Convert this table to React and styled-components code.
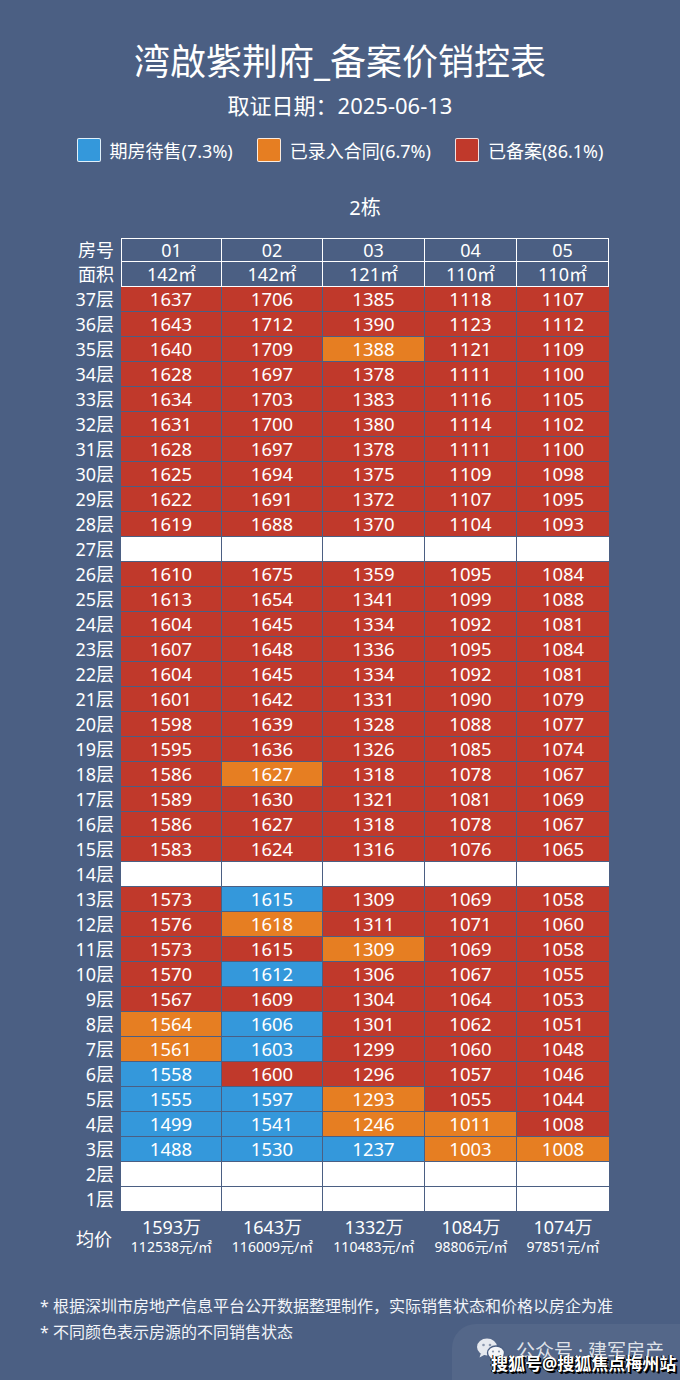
import React from 'react';
import styled, { createGlobalStyle } from 'styled-components';

const BG = '#4b5f83';
const RED = '#c0392b';
const ORANGE = '#e67e22';
const BLUE = '#3498db';

const GlobalStyle = createGlobalStyle`
  html, body {
    margin: 0;
    padding: 0;
    background: ${BG};
  }
  body {
    font-family: "Noto Sans", "Noto Sans CJK SC", sans-serif;
    color: #fff;
  }
`;

const Page = styled.div`
  position: relative;
  width: 680px;
  height: 1380px;
  overflow: hidden;
  background: ${BG};
`;

const Title = styled.h1`
  margin: 39px 0 0;
  height: 46px;
  line-height: 46px;
  font-size: 36px;
  font-weight: 400;
  text-align: center;
`;

const Subtitle = styled.div`
  margin-top: 5px;
  height: 30px;
  line-height: 30px;
  font-size: 22px;
  text-align: center;
`;

const Legend = styled.div`
  margin-top: 17px;
  height: 26px;
  display: flex;
  justify-content: center;
  align-items: center;
  gap: 24px;
`;

const LegendItem = styled.div`
  display: flex;
  align-items: center;
  gap: 9px;
  font-size: 18px;
`;

const Swatch = styled.span`
  width: 24px;
  height: 24px;
  box-sizing: border-box;
  border: 1px solid rgba(255, 255, 255, 0.85);
  border-radius: 2px;
  background: ${(p) => p.$color};
`;

const Building = styled.div`
  margin-top: 30px;
  padding-left: 50px;
  height: 30px;
  line-height: 30px;
  font-size: 20px;
  text-align: center;
`;

const Table = styled.div`
  margin-top: 15px;
  margin-left: 68px;
  display: grid;
  grid-template-columns: 53px 101px 101px 102px 92px 92px;
`;

const RowLabel = styled.div`
  height: ${(p) => p.$h || 25}px;
  line-height: ${(p) => p.$h || 25}px;
  font-size: 18px;
  text-align: right;
  padding-right: 7px;
`;

const HeadCell = styled.div`
  height: ${(p) => p.$h}px;
  line-height: ${(p) => p.$h - 1}px;
  box-sizing: border-box;
  border-right: 1px solid #fff;
  border-bottom: 1px solid #fff;
  border-top: ${(p) => (p.$top ? '1px solid #fff' : 'none')};
  border-left: ${(p) => (p.$first ? '1px solid #fff' : 'none')};
  font-size: 18px;
  text-align: center;
`;

const statusColor = { r: RED, o: ORANGE, b: BLUE, e: '#fff' };

const Cell = styled.div`
  height: 25px;
  line-height: 24px;
  box-sizing: border-box;
  border-right: ${(p) => (p.$last ? 'none' : `1px solid ${BG}`)};
  border-bottom: 1px solid ${BG};
  background: ${(p) => statusColor[p.$s]};
  font-size: 18.5px;
  text-align: center;
`;

const AvgRow = styled.div`
  margin-top: 5px;
  margin-left: 68px;
  display: grid;
  grid-template-columns: 53px 101px 101px 102px 92px 92px;
  align-items: center;
`;

const AvgLabel = styled.div`
  font-size: 18px;
  text-align: right;
  padding-right: 9px;
  padding-top: 4px;
`;

const AvgCell = styled.div`
  display: flex;
  flex-direction: column;
  align-items: center;
`;

const AvgTotal = styled.span`
  font-size: 18px;
  line-height: 21px;
`;

const AvgUnit = styled.span`
  font-size: 14px;
  line-height: 17px;
  white-space: nowrap;
`;

const Notes = styled.div`
  margin-top: 40px;
  padding-left: 40px;
  display: flex;
  flex-direction: column;
  gap: 3px;
`;

const Note = styled.div`
  font-size: 16px;
  line-height: 23px;
  color: #f2f4f8;
`;

const Watermark = styled.div`
  position: absolute;
  left: 452px;
  top: 1324px;
  width: 260px;
  height: 80px;
  border-radius: 24px;
  background: rgba(255, 255, 255, 0.05);
`;

const WechatLine = styled.div`
  position: absolute;
  left: 476px;
  top: 1336px;
  display: flex;
  align-items: center;
  gap: 10px;
  font-size: 19px;
  color: rgba(255, 255, 255, 0.82);
  white-space: nowrap;
`;

const Sohu = styled.div`
  position: absolute;
  left: 491px;
  top: 1350px;
  font-size: 17px;
  font-weight: 700;
  color: #fff;
  white-space: nowrap;
  text-shadow: 1px 1px 0 #000, 2px 2px 0 #000, -1px 0 0 #000;
`;

const floors = {
  37: [[1637, 'r'], [1706, 'r'], [1385, 'r'], [1118, 'r'], [1107, 'r']],
  36: [[1643, 'r'], [1712, 'r'], [1390, 'r'], [1123, 'r'], [1112, 'r']],
  35: [[1640, 'r'], [1709, 'r'], [1388, 'o'], [1121, 'r'], [1109, 'r']],
  34: [[1628, 'r'], [1697, 'r'], [1378, 'r'], [1111, 'r'], [1100, 'r']],
  33: [[1634, 'r'], [1703, 'r'], [1383, 'r'], [1116, 'r'], [1105, 'r']],
  32: [[1631, 'r'], [1700, 'r'], [1380, 'r'], [1114, 'r'], [1102, 'r']],
  31: [[1628, 'r'], [1697, 'r'], [1378, 'r'], [1111, 'r'], [1100, 'r']],
  30: [[1625, 'r'], [1694, 'r'], [1375, 'r'], [1109, 'r'], [1098, 'r']],
  29: [[1622, 'r'], [1691, 'r'], [1372, 'r'], [1107, 'r'], [1095, 'r']],
  28: [[1619, 'r'], [1688, 'r'], [1370, 'r'], [1104, 'r'], [1093, 'r']],
  27: null,
  26: [[1610, 'r'], [1675, 'r'], [1359, 'r'], [1095, 'r'], [1084, 'r']],
  25: [[1613, 'r'], [1654, 'r'], [1341, 'r'], [1099, 'r'], [1088, 'r']],
  24: [[1604, 'r'], [1645, 'r'], [1334, 'r'], [1092, 'r'], [1081, 'r']],
  23: [[1607, 'r'], [1648, 'r'], [1336, 'r'], [1095, 'r'], [1084, 'r']],
  22: [[1604, 'r'], [1645, 'r'], [1334, 'r'], [1092, 'r'], [1081, 'r']],
  21: [[1601, 'r'], [1642, 'r'], [1331, 'r'], [1090, 'r'], [1079, 'r']],
  20: [[1598, 'r'], [1639, 'r'], [1328, 'r'], [1088, 'r'], [1077, 'r']],
  19: [[1595, 'r'], [1636, 'r'], [1326, 'r'], [1085, 'r'], [1074, 'r']],
  18: [[1586, 'r'], [1627, 'o'], [1318, 'r'], [1078, 'r'], [1067, 'r']],
  17: [[1589, 'r'], [1630, 'r'], [1321, 'r'], [1081, 'r'], [1069, 'r']],
  16: [[1586, 'r'], [1627, 'r'], [1318, 'r'], [1078, 'r'], [1067, 'r']],
  15: [[1583, 'r'], [1624, 'r'], [1316, 'r'], [1076, 'r'], [1065, 'r']],
  14: null,
  13: [[1573, 'r'], [1615, 'b'], [1309, 'r'], [1069, 'r'], [1058, 'r']],
  12: [[1576, 'r'], [1618, 'o'], [1311, 'r'], [1071, 'r'], [1060, 'r']],
  11: [[1573, 'r'], [1615, 'r'], [1309, 'o'], [1069, 'r'], [1058, 'r']],
  10: [[1570, 'r'], [1612, 'b'], [1306, 'r'], [1067, 'r'], [1055, 'r']],
  9: [[1567, 'r'], [1609, 'r'], [1304, 'r'], [1064, 'r'], [1053, 'r']],
  8: [[1564, 'o'], [1606, 'b'], [1301, 'r'], [1062, 'r'], [1051, 'r']],
  7: [[1561, 'o'], [1603, 'b'], [1299, 'r'], [1060, 'r'], [1048, 'r']],
  6: [[1558, 'b'], [1600, 'r'], [1296, 'r'], [1057, 'r'], [1046, 'r']],
  5: [[1555, 'b'], [1597, 'b'], [1293, 'o'], [1055, 'r'], [1044, 'r']],
  4: [[1499, 'b'], [1541, 'b'], [1246, 'o'], [1011, 'o'], [1008, 'r']],
  3: [[1488, 'b'], [1530, 'b'], [1237, 'b'], [1003, 'o'], [1008, 'o']],
  2: null,
  1: null,
};

const units = ['01', '02', '03', '04', '05'];
const areas = ['142㎡', '142㎡', '121㎡', '110㎡', '110㎡'];
const averages = [
  ['1593万', '112538元/㎡'],
  ['1643万', '116009元/㎡'],
  ['1332万', '110483元/㎡'],
  ['1084万', '98806元/㎡'],
  ['1074万', '97851元/㎡'],
];

const WechatIcon = () => (
  <svg width="30" height="26" viewBox="0 0 30 26">
    <ellipse cx="11" cy="10" rx="10" ry="8.5" fill="#e6e9ef" />
    <path d="M5 16 L3.5 20.5 L9 17.5 Z" fill="#e6e9ef" />
    <circle cx="7.5" cy="8" r="1.3" fill="#8a97ad" />
    <circle cx="14" cy="8" r="1.3" fill="#8a97ad" />
    <ellipse cx="20" cy="16" rx="8.5" ry="7" fill="#f4f5f8" stroke="#4b5f83" strokeWidth="1.4" />
    <path d="M24 21.5 L26.5 25 L21 22.5 Z" fill="#f4f5f8" />
    <circle cx="17" cy="14.5" r="1.1" fill="#8a97ad" />
    <circle cx="23" cy="14.5" r="1.1" fill="#8a97ad" />
  </svg>
);

export default function App() {
  const floorNums = Array.from({ length: 37 }, (_, i) => 37 - i);
  return (
    <Page>
      <GlobalStyle />
      <Title>湾啟紫荆府_备案价销控表</Title>
      <Subtitle>取证日期：2025-06-13</Subtitle>
      <Legend>
        <LegendItem>
          <Swatch $color={BLUE} />
          期房待售(7.3%)
        </LegendItem>
        <LegendItem>
          <Swatch $color={ORANGE} />
          已录入合同(6.7%)
        </LegendItem>
        <LegendItem>
          <Swatch $color={RED} />
          已备案(86.1%)
        </LegendItem>
      </Legend>
      <Building>2栋</Building>

      <Table>
        <RowLabel $h={24}>房号</RowLabel>
        {units.map((u, i) => (
          <HeadCell key={u} $h={24} $top $first={i === 0}>
            {u}
          </HeadCell>
        ))}
        <RowLabel>面积</RowLabel>
        {areas.map((a, i) => (
          <HeadCell key={i} $h={25} $first={i === 0}>
            {a}
          </HeadCell>
        ))}
        {floorNums.map((f) => {
          const row = floors[f];
          return (
            <React.Fragment key={f}>
              <RowLabel>{f}层</RowLabel>
              {units.map((u, i) =>
                row ? (
                  <Cell key={u} $s={row[i][1]} $last={i === 4}>
                    {row[i][0]}
                  </Cell>
                ) : (
                  <Cell key={u} $s="e" $last={i === 4} />
                )
              )}
            </React.Fragment>
          );
        })}
      </Table>

      <AvgRow>
        <AvgLabel>均价</AvgLabel>
        {averages.map(([t, u], i) => (
          <AvgCell key={i}>
            <AvgTotal>{t}</AvgTotal>
            <AvgUnit>{u}</AvgUnit>
          </AvgCell>
        ))}
      </AvgRow>

      <Notes>
        <Note>* 根据深圳市房地产信息平台公开数据整理制作，实际销售状态和价格以房企为准</Note>
        <Note>* 不同颜色表示房源的不同销售状态</Note>
      </Notes>

      <Watermark />
      <WechatLine>
        <WechatIcon />
        公众号 · 建军房产
      </WechatLine>
      <Sohu>搜狐号@搜狐焦点梅州站</Sohu>
    </Page>
  );
}
